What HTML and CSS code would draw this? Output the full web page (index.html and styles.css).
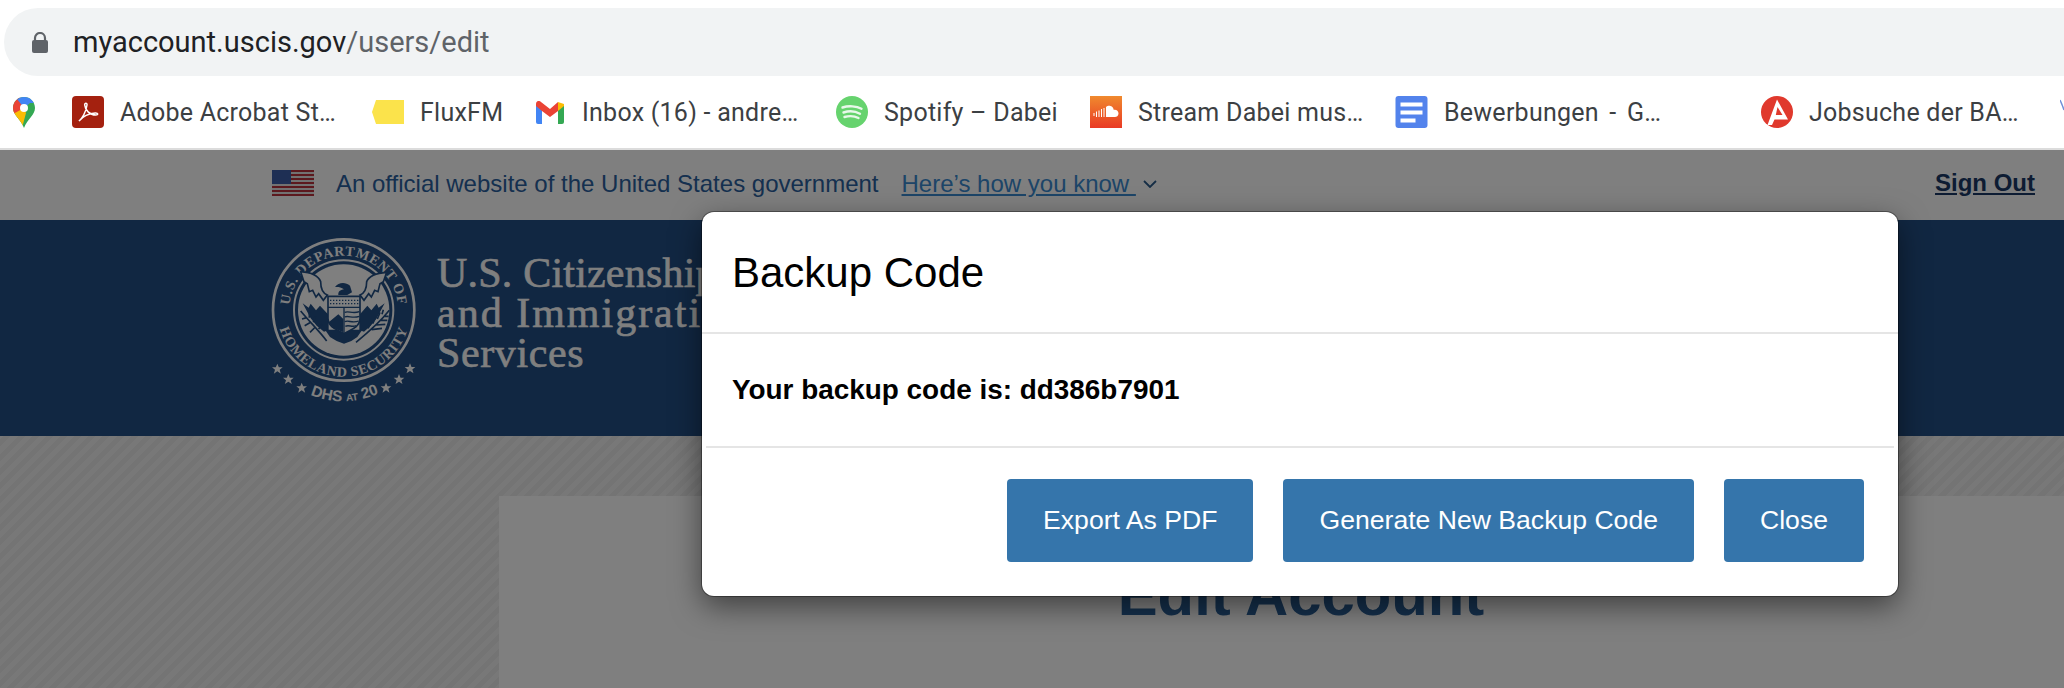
FILE: index.html
```html
<!DOCTYPE html>
<html lang="en">
<head>
<meta charset="utf-8">
<title>Backup Code</title>
<link rel="stylesheet" href="styles.css">
</head>
<body>
<div class="chrome">
  <div class="omnibox">
    <svg class="lock" viewBox="0 0 16 21"><path d="M3 9V6a5 5 0 0 1 10 0v3" fill="none" stroke="#5f6368" stroke-width="2.2"/><rect x="0" y="8" width="16" height="13" rx="2" fill="#5f6368"/></svg>
    <div class="url">myaccount.uscis.gov<span class="url-path">/users/edit</span></div>
  </div>
  <div class="bookmarks">
    <div class="bm">
      <svg class="ico-pin" viewBox="0 0 22 31">
        <defs><clipPath id="pinclip"><path d="M11 0C4.9 0 0 4.9 0 11c0 7 7.5 11 11 20 3.5-9 11-13 11-20C22 4.9 17.1 0 11 0z"/></clipPath></defs>
        <g clip-path="url(#pinclip)">
          <rect width="22" height="31" fill="#34a853"/>
          <path d="M0 14L11 11L13 16L9 31H0z" fill="#fbbc04"/>
          <path d="M0 0H7L11 11L0 17z" fill="#ea4335"/>
          <path d="M4 2L8 0H22V6H17L11 11z" fill="#4285f4"/>
        </g>
        <circle cx="11" cy="11" r="4" fill="#fff"/>
      </svg>
    </div>
    <div class="bm">
      <svg class="ico" viewBox="0 0 32 32"><rect width="32" height="32" rx="4" fill="#a4210f"/><path d="M7 25c3-2 7-9 8-16 .3-2.5-2.5-2.5-2.3 0 .4 5 5 10 11 10 3 0 2.5-2.2-.5-2-5 .3-12 3-16.2 8z" fill="none" stroke="#fff" stroke-width="1.5"/></svg>
      <span class="bm-text">Adobe Acrobat St…</span>
    </div>
    <div class="bm">
      <svg class="ico-flux" viewBox="0 0 32 24"><path d="M0 12L4 0H32V24H4z" fill="#fbe34b"/></svg>
      <span class="bm-text">FluxFM</span>
    </div>
    <div class="bm">
      <svg class="ico-gmail" viewBox="0 0 28 23">
        <path d="M0 3v18a2 2 0 0 0 2 2h4V8z" fill="#4285f4"/>
        <path d="M28 3v18a2 2 0 0 1-2 2h-4V8z" fill="#34a853"/>
        <path d="M22 1L28 3V5L22 10z" fill="#fbbc04"/>
        <path d="M0 3C0 0 3-1 5 1L14 8 22 1V10L14 16 6 10 0 5z" fill="#ea4335"/>
      </svg>
      <span class="bm-text">Inbox (16) - andre…</span>
    </div>
    <div class="bm">
      <svg class="ico" viewBox="0 0 32 32"><circle cx="16" cy="16" r="16" fill="#66d36e"/><path d="M6.5 11.5c6-2 14-1.5 19 1.2M7.5 16.5c5-1.6 12-1.2 16.5 1.2M8.5 21c4.500-1.200 10-1 14 1" fill="none" stroke="#e8f8ea" stroke-width="2.4" stroke-linecap="round"/></svg>
      <span class="bm-text">Spotify – Dabei</span>
    </div>
    <div class="bm">
      <svg class="ico" viewBox="0 0 32 32">
        <defs><linearGradient id="scgrad" x1="0" y1="0" x2="0" y2="1"><stop offset="0" stop-color="#f08a2e"/><stop offset="1" stop-color="#e93a24"/></linearGradient></defs>
        <rect width="32" height="32" fill="url(#scgrad)"/>
        <path d="M16 11c1-1 3-1.5 4.5-1 2 .6 3 2.2 3.3 4 2.4-.6 4.7 1 4.7 3.5S26.5 21 25 21H16z" fill="#fff"/>
        <path d="M4 17v3M6.5 15.500V21M9 14.500V21M11.500 13V21M14 12V21" stroke="#fff" stroke-width="1"/>
      </svg>
      <span class="bm-text">Stream Dabei mus…</span>
    </div>
    <div class="bm">
      <svg class="ico-docs" viewBox="0 0 32 32"><rect width="32" height="32" rx="3" fill="#5383ec"/><path d="M5 8.5H27M5 16.5H27M5 24.5H20" stroke="#fff" stroke-width="4"/></svg>
      <span class="bm-text bm-wide">Bewerbungen - G…</span>
    </div>
    <div class="bm">
      <svg class="ico" viewBox="0 0 32 32"><circle cx="16" cy="16" r="16" fill="#e0392d"/><path d="M16 3.5L6.5 29H11L13.500 23.500H27z" fill="#fff"/><path d="M16.5 11L14.8 19H21.5z" fill="#e0392d"/></svg>
      <span class="bm-text">Jobsuche der BA…</span>
    </div>
    <div class="bm">
      <svg class="ico" viewBox="0 0 32 32"><path d="M4 14C2 8 1 6 0 4" fill="none" stroke="#6f8fd8" stroke-width="1.5"/></svg>
    </div>
  </div>
</div>

<div class="page">
  <div class="gov-banner">
    <svg class="flag" viewBox="0 0 42 26">
      <rect width="42" height="26" fill="#e4e4e4"/>
      <path d="M0 1H42M0 5H42M0 9H42M0 13H42M0 17H42M0 21H42M0 25H42" stroke="#b8323c" stroke-width="2"/>
      <rect width="19" height="14" fill="#3c5fa8"/>
    </svg>
    <span class="gov-text">An official website of the United States government</span>
    <a class="gov-link">Here’s how you know </a>
    <svg class="chevron" viewBox="0 0 14 8"><path d="M1 1L7 7L13 1" fill="none" stroke="#2a5a8a" stroke-width="1.8"/></svg>
    <a class="sign-out">Sign Out</a>
  </div>

  <header class="site-header">
    <svg class="seal" viewBox="0 0 480 540">
      <defs>
        <path id="seal-top" d="M58 225A163 163 0 0 1 384 225"/>
        <path id="seal-bottom" d="M21 225A200 200 0 0 0 421 225"/>
        <path id="seal-anniv" d="M118 478Q222 522 330 474"/>
        <polygon id="star" points="0,-16 4.5,-5 16,-5 7,2.5 10.5,14 0,7 -10.5,14 -7,2.5 -16,-5 -4.5,-5"/>
      </defs>
      <g class="seal-light">
        <circle class="seal-ring" cx="221" cy="225" r="212"/>
        <circle class="seal-ring-thin" cx="221" cy="225" r="149"/>
        <circle cx="221" cy="225" r="137"/>
        <text class="seal-text"><textPath href="#seal-top" startOffset="50%" text-anchor="middle">U.S. DEPARTMENT OF</textPath></text>
        <text class="seal-text"><textPath href="#seal-bottom" startOffset="50%" text-anchor="middle">HOMELAND SECURITY</textPath></text>
        <text class="seal-anniv"><textPath href="#seal-anniv" startOffset="50%" text-anchor="middle">DHS <tspan class="seal-at">AT</tspan> 20</textPath></text>
        <use href="#star" x="22" y="402"/><use href="#star" x="55" y="433"/><use href="#star" x="95" y="459"/>
        <use href="#star" x="348" y="459"/><use href="#star" x="387" y="433"/><use href="#star" x="420" y="401"/>
      </g>
      <g class="seal-dark">
        <path d="M98 205L116 218 122 206 138 226 150 212 176 240V285L162 290 140 272 122 250z"/>
        <path d="M344 205L326 218 320 206 304 226 292 212 268 240V285L282 290 302 272 320 250z"/>
        <path d="M165 284H277L262 306 244 318 222 326 200 318 180 306z"/>
        <path d="M195 156C205 142 226 140 240 152L246 172 232 180H205C204 170 210 165 222 163 212 156 204 155 195 156z"/>
      </g>
      <g class="seal-wing">
        <path d="M92 110C120 112 145 122 152 140 152 160 160 175 172 180L160 196 146 176 138 186 128 166 118 170 112 146 102 140z"/>
        <path d="M350 112C322 114 297 122 290 140 290 160 282 175 270 180L282 196 296 176 304 186 314 166 324 170 330 146 340 140z"/>
      </g>
      <path class="seal-shield" d="M174 184H270V250C270 280 236 286 222 296 208 286 174 280 174 250z"/>
      <g class="seal-lines">
        <path class="seal-dots" d="M180 196H266M180 206H266"/>
        <path d="M174 217H270M222 217V295"/>
        <path d="M224 232C236 226 246 238 268 230M224 246C236 240 246 252 268 244M224 260C236 254 246 266 266 258M226 274C236 268 246 278 258 272"/>
      </g>
      <path class="seal-fill" d="M176 262L205 238 220 252V292C200 284 184 278 176 262z"/>
      <g class="seal-branch">
        <path d="M170 318C150 290 120 262 92 228M110 248L96 252M122 262L104 272M136 276L120 292M118 248L118 232M130 262L136 244M146 282L156 268"/>
        <path d="M258 322C290 296 330 262 358 226M344 244L356 244M332 256L352 256M318 270L346 268M305 284L336 280M336 238L340 224M322 252L330 232M308 266L318 246M294 280L304 262"/>
      </g>
    </svg>
    <div class="site-title">
      <div class="title-first">U.S. Citizenship</div>
      <div class="title-second">and Immigration</div>
      <div>Services</div>
    </div>
  </header>

  <main class="content">
    <section class="card">
      <h1 class="card-title">Edit Account</h1>
    </section>
  </main>

  <div class="backdrop"></div>

  <div class="modal">
    <div class="modal-header"><h4 class="modal-title">Backup Code</h4></div>
    <div class="modal-body"><strong class="code-line">Your backup code is: dd386b7901</strong></div>
    <div class="modal-footer">
      <button class="btn">Export As PDF</button>
      <button class="btn">Generate New Backup Code</button>
      <button class="btn">Close</button>
    </div>
  </div>
</div>
</body>
</html>
```

FILE: styles.css
```css
* { box-sizing: border-box; }

html, body {
  margin: 0;
  height: 688px;
  overflow: hidden;
  background: #fff;
  font-family: "Liberation Sans", Arial, sans-serif;
}

.chrome {
  height: 150px;
  background: #fff;
  border-bottom: 2px solid #dcdcdc;
  padding-top: 8px;
}

.omnibox {
  height: 68px;
  margin-left: 4px;
  border-radius: 34px 0 0 34px;
  background: #f1f3f4;
  display: flex;
  align-items: center;
  padding-left: 28px;
}

.lock { width: 16px; height: 21px; margin-top: 1px; }

.url {
  margin-left: 25px;
  font-family: Roboto, sans-serif;
  font-size: 29px;
  color: #202124;
}

.url-path { color: #5f6368; }

.bookmarks {
  height: 72px;
  display: grid;
  grid-template-columns: 59px 300px 164px 300px 254px 305px 366px 299px 32px;
  padding-left: 13px;
  align-items: center;
  overflow: hidden;
}

.bm {
  display: flex;
  align-items: center;
  gap: 16px;
  white-space: nowrap;
}

.bm-text {
  font-family: Roboto, sans-serif;
  font-size: 25px;
  letter-spacing: 0.25px;
  color: #3c4043;
}

.bm-wide { word-spacing: 4px; }

.ico { width: 32px; height: 32px; flex: none; }
.ico-docs { width: 33px; height: 32px; flex: none; }
.ico-pin { width: 22px; height: 31px; flex: none; }
.ico-flux { width: 32px; height: 24px; flex: none; }
.ico-gmail { width: 28px; height: 23px; flex: none; margin-right: 2px; }

.page {
  position: relative;
  height: 538px;
  overflow: hidden;
  background: repeating-linear-gradient(135deg, #f0f0f0 0 5px, #e9e9e9 5px 10px);
}

.gov-banner {
  height: 70px;
  background: #fff;
  display: flex;
  align-items: center;
  padding: 0 29px 2px 272px;
  font-size: 24px;
}

.flag { width: 42px; height: 26px; flex: none; margin-bottom: 2px; }
.gov-text { margin-left: 22px; color: #2a609e; }
.gov-link { margin-left: 23px; color: #3a8ad0; text-decoration: underline; white-space: pre; }
.chevron { width: 14px; height: 8px; margin-left: 7px; }

.sign-out {
  margin-left: auto;
  margin-bottom: 3px;
  font-weight: 700;
  color: #1a3866;
  text-decoration: underline;
}

.site-header {
  height: 216px;
  background: #224e84;
  display: flex;
  padding-left: 270px;
  gap: 7px;
}

.seal { width: 160px; height: 180px; margin-top: 15px; flex: none; }
.seal-light { fill: #fff; }
.seal-ring { fill: none; stroke: #fff; stroke-width: 8; }
.seal-ring-thin { fill: none; stroke: #fff; stroke-width: 6; }
.seal-text { font-family: "Liberation Serif", serif; font-size: 42px; font-weight: 700; letter-spacing: 2px; }
.seal-anniv { font-family: "Liberation Sans", sans-serif; font-weight: 700; font-size: 46px; }
.seal-at { font-size: 30px; }
.seal-dark { fill: #224e84; }
.seal-wing { fill: #fff; stroke: #224e84; stroke-width: 5; }
.seal-shield { fill: #fff; stroke: #224e84; stroke-width: 5; }
.seal-lines { fill: none; stroke: #224e84; stroke-width: 4; }
.seal-dots { stroke-dasharray: 4 5; }
.seal-fill { fill: #224e84; }
.seal-branch { fill: none; stroke: #224e84; stroke-width: 5; }

.site-title {
  margin-top: 33px;
  font-family: "Liberation Serif", serif;
  font-size: 42px;
  line-height: 40px;
  letter-spacing: 0.6px;
  color: #fff;
  -webkit-text-stroke: 0.6px #fff;
  white-space: nowrap;
}

.title-first { letter-spacing: 0.2px; }
.title-second { letter-spacing: 2px; }

.content { padding: 60px 0 0 499px; }

.card {
  width: 1604px;
  height: 300px;
  background: #fff;
  padding-top: 64px;
}

.card-title {
  margin: 0;
  text-align: center;
  font-size: 59.8px;
  line-height: 70px;
  font-weight: 700;
  color: #2a6098;
}

.backdrop {
  position: absolute;
  inset: 0;
  background: rgba(0, 0, 0, 0.5);
}

.modal {
  position: absolute;
  left: 702px;
  top: 62px;
  width: 1196px;
  height: 384px;
  background: #fff;
  border-radius: 12px;
  box-shadow: 0 0 0 1px rgba(0, 0, 0, 0.35), 0 10px 30px rgba(0, 0, 0, 0.5);
}

.modal-header {
  height: 122px;
  border-bottom: 2px solid #e5e5e5;
  padding: 36px 0 0 30px;
}

.modal-title {
  margin: 0;
  font-size: 42px;
  line-height: 50px;
  font-weight: 400;
  color: #000;
}

.modal-body {
  height: 112px;
  padding: 40px 0 0 30px;
}

.code-line {
  font-size: 27.9px;
  line-height: 32px;
  color: #000;
}

.modal-footer {
  margin: 0 4px;
  border-top: 2px solid #e5e5e5;
  padding: 31px 30px 0 0;
  display: flex;
  justify-content: flex-end;
  gap: 30px;
}

.btn {
  height: 83px;
  padding: 0 36px;
  border: 0;
  border-radius: 4px;
  background: #3575ab;
  color: #fff;
  font-family: "Liberation Sans", Arial, sans-serif;
  font-size: 26.6px;
}
```
